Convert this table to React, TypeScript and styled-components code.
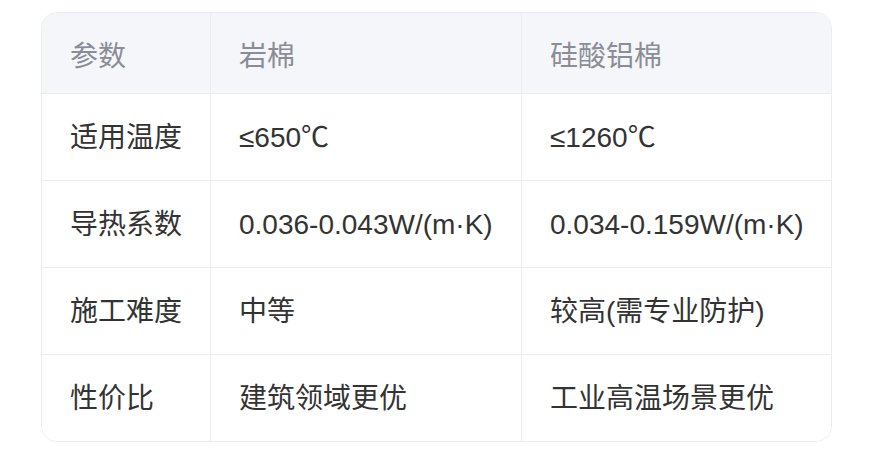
import React from "react";
import styled, { createGlobalStyle } from "styled-components";

const Global = createGlobalStyle`
  html, body { margin: 0; padding: 0; background: #ffffff; }
  body { font-family: "Liberation Sans", "Noto Sans CJK SC", sans-serif; }
`;

const Page = styled.div`
  padding: 12px 0 0 41px;
`;

const Table = styled.div`
  width: 791px;
  box-sizing: border-box;
  border: 1px solid #ebedf0;
  border-radius: 16px;
  overflow: hidden;
  background: #ffffff;
`;

const Row = styled.div<{ $head?: boolean }>`
  display: grid;
  grid-template-columns: 168px 311px 310px;
  background: ${(p) => (p.$head ? "#f5f6f9" : "#ffffff")};
  & + & { border-top: 1px solid #ebedf0; }
`;

const Cell = styled.div<{ $head?: boolean }>`
  box-sizing: border-box;
  padding: ${(p) => (p.$head ? "23px 20px 15px 28px" : "23px 20px 21px 28px")};
  font-size: 28px;
  line-height: 42px;
  color: ${(p) => (p.$head ? "#8a8d96" : "#333333")};
  white-space: nowrap;
  & + & { border-left: 1px solid #ebedf0; }
`;

const head = ["参数", "岩棉", "硅酸铝棉"];
const rows = [
  ["适用温度", "≤650℃", "≤1260℃"],
  ["导热系数", "0.036-0.043W/(m·K)", "0.034-0.159W/(m·K)"],
  ["施工难度", "中等", "较高(需专业防护)"],
  ["性价比", "建筑领域更优", "工业高温场景更优"],
];

export default function App() {
  return (
    <Page>
      <Global />
      <Table>
        <Row $head>
          {head.map((h) => (
            <Cell $head key={h}>{h}</Cell>
          ))}
        </Row>
        {rows.map((r) => (
          <Row key={r[0]}>
            {r.map((c, i) => (
              <Cell key={i}>{c}</Cell>
            ))}
          </Row>
        ))}
      </Table>
    </Page>
  );
}
